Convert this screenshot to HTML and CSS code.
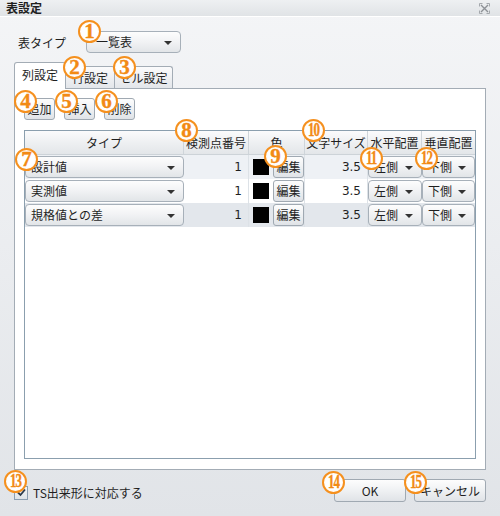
FILE: index.html
```html
<!DOCTYPE html>
<html lang="ja">
<head>
<meta charset="utf-8">
<title>表設定</title>
<link rel="stylesheet" href="styles.css">
</head>
<body>
<div class="window">
  <div class="titlebar">
    <span class="title">表設定</span>
    <svg class="close" width="11" height="11" viewBox="0 0 11 11">
      <path d="M2 2 L9 9 M9 2 L2 9" stroke="#8d9196" stroke-width="1.4" fill="none"/>
      <path d="M0.5 3.5 V0.5 H3.5 M7.5 0.5 H10.5 V3.5 M10.5 7.5 V10.5 H7.5 M3.5 10.5 H0.5 V7.5" stroke="#a4a8ad" stroke-width="1" fill="none"/>
    </svg>
  </div>
  <div class="content">
    <div class="type-row">
      <span class="label">表タイプ</span>
      <div class="combo table-type"><span class="combo-text">一覧表</span><span class="arrow"></span></div>
    </div>
    <div class="tabs">
      <div class="tab active t1">列設定</div>
      <div class="tab t2">行設定</div>
      <div class="tab t3">セル設定</div>
    </div>
    <div class="panel">
      <div class="toolbar">
        <div class="btn small">追加</div>
        <div class="btn small">挿入</div>
        <div class="btn small">削除</div>
      </div>
      <div class="grid">
        <div class="row head">
          <div class="cell">タイプ</div>
          <div class="cell">検測点番号</div>
          <div class="cell">色</div>
          <div class="cell">文字サイズ</div>
          <div class="cell">水平配置</div>
          <div class="cell">垂直配置</div>
        </div>
        <div class="row r1">
          <div class="cell pick"><div class="combo"><span class="combo-text">設計値</span><span class="arrow"></span></div></div>
          <div class="cell num">1</div>
          <div class="cell color"><span class="swatch"></span><div class="btn edit">編集</div></div>
          <div class="cell num">3.5</div>
          <div class="cell pick"><div class="combo"><span class="combo-text">左側</span><span class="arrow"></span></div></div>
          <div class="cell pick"><div class="combo"><span class="combo-text">下側</span><span class="arrow"></span></div></div>
        </div>
        <div class="row r2">
          <div class="cell pick"><div class="combo"><span class="combo-text">実測値</span><span class="arrow"></span></div></div>
          <div class="cell num">1</div>
          <div class="cell color"><span class="swatch"></span><div class="btn edit">編集</div></div>
          <div class="cell num">3.5</div>
          <div class="cell pick"><div class="combo"><span class="combo-text">左側</span><span class="arrow"></span></div></div>
          <div class="cell pick"><div class="combo"><span class="combo-text">下側</span><span class="arrow"></span></div></div>
        </div>
        <div class="row r3">
          <div class="cell pick"><div class="combo"><span class="combo-text">規格値との差</span><span class="arrow"></span></div></div>
          <div class="cell num">1</div>
          <div class="cell color"><span class="swatch"></span><div class="btn edit">編集</div></div>
          <div class="cell num">3.5</div>
          <div class="cell pick"><div class="combo"><span class="combo-text">左側</span><span class="arrow"></span></div></div>
          <div class="cell pick"><div class="combo"><span class="combo-text">下側</span><span class="arrow"></span></div></div>
        </div>
      </div>
    </div>
    <div class="footer">
      <label class="check">
        <span class="box"><svg width="11" height="11" viewBox="0 0 11 11"><path d="M2 5.5 L4.5 8 L9 2.5" stroke="#2b3a4a" stroke-width="1.8" fill="none"/></svg></span>
        <span>TS出来形に対応する</span>
      </label>
      <div class="actions">
        <div class="btn wide">OK</div>
        <div class="btn wide">キャンセル</div>
      </div>
    </div>
  </div>

  <div class="badge b1">1</div>
  <div class="badge b2">2</div>
  <div class="badge b3">3</div>
  <div class="badge b4">4</div>
  <div class="badge b5">5</div>
  <div class="badge b6">6</div>
  <div class="badge b7">7</div>
  <div class="badge b8">8</div>
  <div class="badge b9">9</div>
  <div class="badge two b10"><span>10</span></div>
  <div class="badge two b11"><span>11</span></div>
  <div class="badge two b12"><span>12</span></div>
  <div class="badge two b13"><span>13</span></div>
  <div class="badge two b14"><span>14</span></div>
  <div class="badge two b15"><span>15</span></div>
</div>
</body>
</html>
```

FILE: styles.css
```css
* { box-sizing: border-box; }
html, body { margin: 0; padding: 0; }
body {
  width: 500px;
  height: 516px;
  overflow: hidden;
  font-family: "Noto Sans CJK JP", "Noto Sans", sans-serif;
  font-size: 12px;
  color: #1f1f1f;
}
.window {
  position: relative;
  width: 500px;
  height: 516px;
  background: linear-gradient(#f4f5f7, #e1e4e8);
  display: flex;
  flex-direction: column;
}
.titlebar {
  height: 17px;
  flex: none;
  background: linear-gradient(#eef0f2, #e0e3e6);
  border-bottom: 1px solid #ffffff;
  display: flex;
  align-items: center;
  justify-content: space-between;
  padding: 0 10px 0 6px;
}
.title { font-weight: bold; font-size: 12px; line-height: 16px; }
.close { display: block; }

.content {
  flex: 1;
  display: flex;
  flex-direction: column;
  padding: 14px 14px 0 14px;
}
.type-row {
  height: 22px;
  display: flex;
  align-items: center;
}
.label { width: 72px; padding-left: 4px; }

.combo {
  position: relative;
  height: 22px;
  border: 1px solid #a7b0b9;
  border-radius: 4px;
  background: linear-gradient(#fdfdfd, #f1f2f4 50%, #e2e5e8);
  display: flex;
  align-items: center;
  padding-left: 5px;
  line-height: 20px;
}
.table-type { width: 95px; padding-left: 9px; }
.arrow {
  position: absolute;
  right: 8px;
  top: 9px;
  width: 0;
  height: 0;
  border-left: 4px solid transparent;
  border-right: 4px solid transparent;
  border-top: 4px solid #333;
}

.tabs {
  margin-top: 9px;
  height: 26px;
  display: flex;
  align-items: flex-end;
  position: relative;
  z-index: 1;
}
.tab {
  height: 22px;
  border: 1px solid #a3acb5;
  border-bottom: none;
  border-radius: 3px 3px 0 0;
  background: linear-gradient(#fbfbfc, #e3e6ea);
  display: flex;
  align-items: center;
  justify-content: center;
  line-height: 20px;
}
.tab.active {
  height: 27px;
  margin-bottom: -1px;
  background: #ffffff;
  padding-bottom: 2px;
}
.t1 { width: 52px; }
.t2 { width: 50px; margin-left: -1px; }
.t3 { width: 59px; margin-left: -1px; }

.panel {
  height: 382px;
  flex: none;
  background: #ffffff;
  border: 1px solid #a3acb5;
  padding: 9px 9px 10px 9px;
  display: flex;
  flex-direction: column;
}
.toolbar {
  display: flex;
  gap: 9px;
  height: 22px;
}
.btn {
  height: 22px;
  border: 1px solid #a0a9b2;
  border-radius: 3px;
  background: linear-gradient(#fdfdfd, #eff1f3 50%, #e0e3e7);
  display: flex;
  align-items: center;
  justify-content: center;
  line-height: 20px;
}
.btn.small { width: 31px; }

.grid {
  margin-top: 10px;
  flex: 1;
  border: 1px solid #8b9fae;
  background: #ffffff;
  display: flex;
  flex-direction: column;
}
.row {
  display: grid;
  grid-template-columns: 159px 65px 56px 63px 54px 53px;
  height: 24px;
}
.cell {
  display: flex;
  align-items: center;
  border-right: 1px solid #dde2e7;
}
.cell:last-child { border-right: none; }
.head {
  background: linear-gradient(#fbfbfc, #eef0f2 50%, #e3e6e9);
  border-bottom: 1px solid #cdd3d8;
}
.head .cell {
  justify-content: center;
  border-right: 1px solid #cfd5da;
  line-height: 22px;
}
.head .cell:last-child { border-right: none; }
.r1 { background: #eef1f5; }
.r2 { background: #ffffff; }
.r3 { background: #e3e7ec; }
.cell.pick { padding: 1px 0; border-right: none; }
.cell.pick .combo { width: 100%; }
.cell.num { justify-content: flex-end; padding-right: 6px; font-family: "DejaVu Sans", "Noto Sans", sans-serif; font-size: 12px; }
.cell.color { padding-left: 4px; gap: 4px; }
.swatch { width: 16px; height: 16px; background: #000; flex: none; }
.btn.edit { width: 31px; height: 22px; }

.footer {
  margin-top: 9px;
  height: 23px;
  display: flex;
  align-items: center;
}
.check {
  display: flex;
  align-items: center;
  gap: 5px;
  padding-top: 4px;
}
.box {
  width: 14px;
  height: 14px;
  border: 1px solid #8a9db0;
  background: linear-gradient(#f4f6f8, #dde2e7);
  display: flex;
  align-items: center;
  justify-content: center;
}
.box svg { display: block; }
.actions { margin-left: auto; display: flex; gap: 8px; }
.btn.wide { width: 72px; height: 23px; }

.badge {
  position: absolute;
  width: 23px;
  height: 23px;
  border-radius: 50%;
  border: 2px solid #f5901e;
  background: radial-gradient(#ffffff 55%, #fff3e2);
  color: #f28a14;
  font-family: "Liberation Serif", "DejaVu Serif", serif;
  font-weight: bold;
  font-size: 21px;
  line-height: 19px;
  display: flex;
  align-items: center;
  justify-content: center;
  z-index: 5;
  -webkit-text-stroke: 0.4px #f28a14;
}
.badge.two span {
  display: inline-block;
  font-size: 18px;
  letter-spacing: -1.5px;
  margin-left: -1px;
  transform: scaleX(0.72);
}
.b1 { left: 78px; top: 20px; }
.b2 { left: 63px; top: 56px; }
.b3 { left: 113px; top: 56px; }
.b4 { left: 14px; top: 90px; }
.b5 { left: 55px; top: 90px; }
.b6 { left: 95px; top: 90px; }
.b7 { left: 15px; top: 148px; }
.b8 { left: 175px; top: 119px; }
.b9 { left: 264px; top: 145px; }
.b10 { left: 302px; top: 119px; }
.b11 { left: 360px; top: 147px; }
.b12 { left: 415px; top: 147px; }
.b13 { left: 4px; top: 470px; }
.b14 { left: 322px; top: 471px; }
.b15 { left: 404px; top: 471px; }
```
